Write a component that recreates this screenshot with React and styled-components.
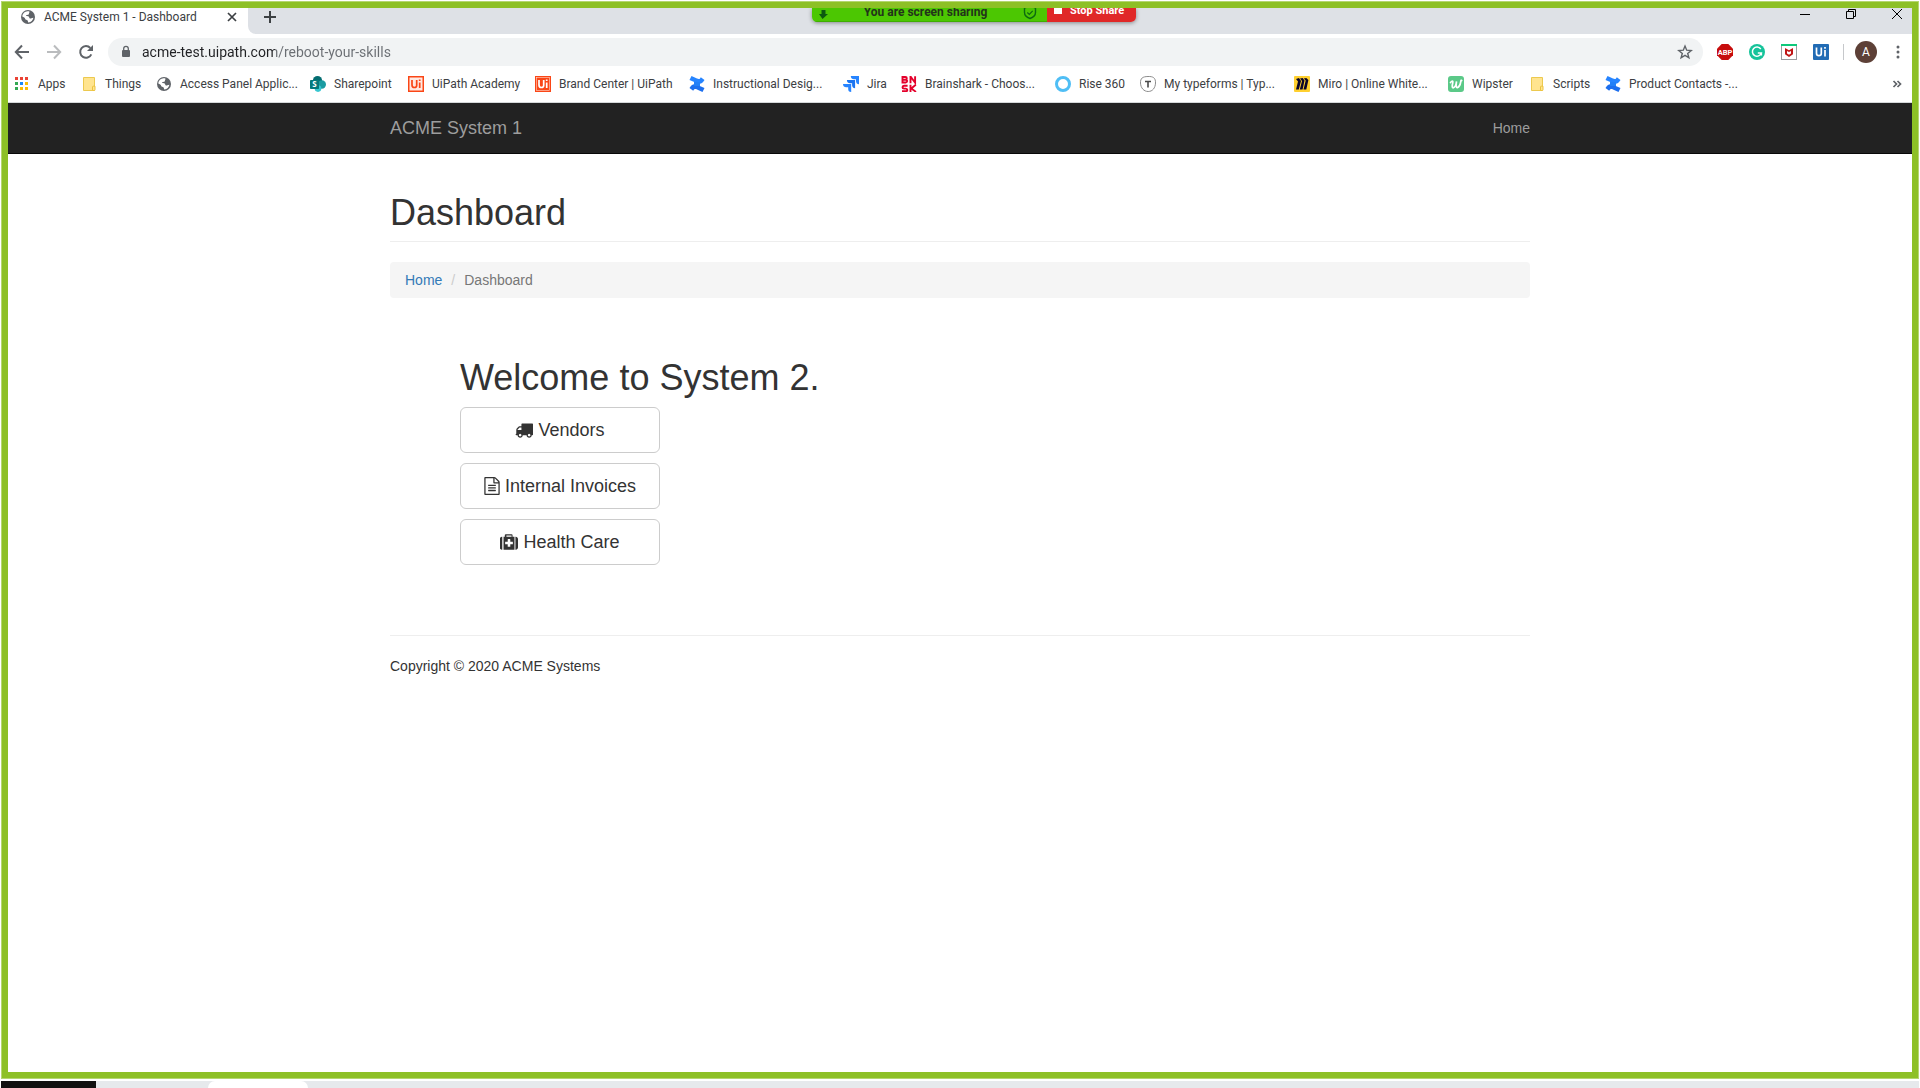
import React from "react";
import styled, { createGlobalStyle } from "styled-components";

const uiFont = 'Roboto, "Open Sans", sans-serif';
const pageFont = '"Liberation Sans", Arial, sans-serif';

const GlobalStyle = createGlobalStyle`
  *, *::before, *::after { box-sizing: border-box; }
  body { margin: 0; background: #fff; }
  button { font: inherit; color: inherit; padding: 0; border: 0; background: none; }
  svg { display: block; flex: none; }
`;

const Screen = styled.div`
  display: flex;
  flex-direction: column;
  min-height: 100vh;
  padding: 1px 1px 0;
  background: #fff;
`;

const ShareFrame = styled.div`
  position: relative;
  flex: 1;
  display: flex;
  flex-direction: column;
  border: 1px solid #b4d670;
  background: #8dc026;
  padding: 6px;
`;

const Browser = styled.div`
  position: relative;
  flex: 1;
  overflow: hidden;
  background: #fff;
  font-family: ${uiFont};
  font-size: 12px;
  color: #3c4043;
`;

/* Tab strip */

const TabStrip = styled.div`
  display: flex;
  height: 26px;
`;

const Tab = styled.div`
  display: flex;
  align-items: center;
  gap: 8px;
  width: 240px;
  height: 18px;
  padding: 0 8px 0 12px;
  line-height: 18px;
  white-space: nowrap;
`;

const TabTitle = styled.span`
  flex: 1;
`;

const IconButton = styled.button`
  display: flex;
  align-items: center;
  justify-content: center;
  flex: none;
  width: ${(p) => p.$width || 28}px;
  height: ${(p) => p.$height || 28}px;
  color: ${(p) => p.$color || "#5f6368"};
`;

const StripRest = styled.div`
  flex: 1;
  display: flex;
  justify-content: space-between;
  padding-left: 8px;
  background: #dee1e6;
  border-bottom-left-radius: 8px;
`;

const WindowControls = styled.div`
  display: flex;
  margin-right: -8px;
`;

/* Screen sharing bar */

const ShareBar = styled.div`
  position: absolute;
  top: 0;
  left: 804px;
  display: flex;
  height: 14px;
  border-radius: 0 0 5px 5px;
  box-shadow: 0 1px 4px rgba(0, 0, 0, 0.4);
  overflow: hidden;
  font-size: 12px;
  font-weight: 700;
  line-height: 16px;
  white-space: nowrap;
`;

const ShareStatus = styled.div`
  display: flex;
  align-items: flex-end;
  justify-content: space-between;
  width: 235px;
  padding: 0 10px 1px 6px;
  background: #4cc702;
  border-bottom: 1px solid #3fae00;
  color: #23331b;
`;

const StopShare = styled.button`
  display: flex;
  align-items: flex-end;
  gap: 8px;
  width: 89px;
  padding: 0 0 3px 7px;
  background: #e02828;
  color: #fff;
  font-size: 11px;
  font-weight: 700;
  line-height: 16px;
`;

const StopMark = styled.span`
  width: 8px;
  height: 8px;
  margin-bottom: 5px;
  background: #fff;
`;

/* Toolbar */

const Toolbar = styled.div`
  display: flex;
  align-items: center;
  gap: 4px;
  height: 36px;
`;

const AddressBar = styled.label`
  flex: 1;
  display: flex;
  align-items: center;
  height: 28px;
  margin: 0 4px;
  padding: 0 10px 0 12px;
  border-radius: 14px;
  background: #f1f3f4;
  color: #5f6368;
`;

const AddressInput = styled.input`
  flex: 1;
  min-width: 0;
  height: 24px;
  margin-left: 10px;
  padding: 0;
  border: 0;
  outline: 0;
  font-family: ${uiFont};
  font-size: 14px;
  line-height: 24px;
  color: #202124;
  background: linear-gradient(to right, #202124 133px, #6a6e73 133px);
  -webkit-background-clip: text;
  background-clip: text;
  -webkit-text-fill-color: transparent;
`;

const Divider = styled.span`
  width: 1px;
  height: 16px;
  margin: 0 4px;
  background: #c6c8cb;
`;

const Avatar = styled.span`
  display: flex;
  align-items: center;
  justify-content: center;
  width: 22px;
  height: 22px;
  border-radius: 50%;
  background: #5d4037;
  color: #fff;
  font-size: 12px;
`;

/* Bookmarks */

const Bookmarks = styled.nav`
  display: flex;
  align-items: center;
  height: 33px;
  padding: 0 6px 4px;
  border-bottom: 1px solid #d5d8da;
`;

const Bookmark = styled.a`
  display: flex;
  align-items: center;
  gap: 8px;
  flex: none;
  width: ${(p) => p.$width}px;
  height: 28px;
  color: inherit;
  text-decoration: none;
  white-space: nowrap;
`;

const Spacer = styled.span`
  flex: 1;
`;

/* Web page */

const Page = styled.div`
  font-family: ${pageFont};
  font-size: 14px;
  line-height: 20px;
  color: #333;
`;

const Container = styled.div`
  max-width: 1140px;
  margin: 0 auto;
`;

const Navbar = styled.header`
  background: #222;
  border-bottom: 1px solid #080808;
`;

const NavRow = styled(Container)`
  display: flex;
  align-items: center;
  justify-content: space-between;
  height: 50px;
`;

const NavLink = styled.a`
  color: #9d9d9d;
  text-decoration: none;
  font-size: ${(p) => (p.$brand ? 18 : 14)}px;
`;

const Title = styled.h1`
  margin: 0;
  font-size: 36px;
  font-weight: 400;
  line-height: 40px;
`;

const PageHeader = styled.div`
  margin: 39px 0 20px;
  padding-bottom: 8px;
  border-bottom: 1px solid #eee;
`;

const Breadcrumb = styled.nav`
  display: flex;
  padding: 8px 15px;
  border-radius: 4px;
  background: #f5f5f5;
  color: #777;
`;

const Crumb = styled.a`
  color: #337ab7;
  text-decoration: none;
`;

const Slash = styled.span`
  padding: 0 9px;
  color: #ccc;
`;

const Welcome = styled.main`
  padding: 60px 70px 70px;
`;

const Actions = styled.div`
  display: flex;
  flex-direction: column;
  gap: 10px;
  width: 200px;
  margin-top: 9px;
`;

const ActionButton = styled.button`
  && {
    display: flex;
    align-items: center;
    justify-content: center;
    gap: 5px;
    height: 46px;
    border: 1px solid #ccc;
    border-radius: 6px;
    background: #fff;
    font-size: 18px;
    line-height: 24px;
    color: #333;
  }
`;

const Footer = styled.footer`
  padding: 20px 0;
  border-top: 1px solid #eee;
`;

/* Taskbar edge */

const Taskbar = styled.div`
  display: flex;
  height: 7px;
  margin-top: 2px;
  background: #e6e9ec;
`;

const TaskStart = styled.span`
  width: 95px;
  background: #111;
`;

const TaskTab = styled.span`
  width: 100px;
  margin-left: 112px;
  border-radius: 8px 8px 0 0;
  background: #fff;
`;

/* Icons */

const Svg = ({ size = 16, box = "0 0 16 16", width, children, ...rest }) => (
  <svg width={width || size} height={size} viewBox={box} fill="none" aria-hidden="true" {...rest}>
    {children}
  </svg>
);

const Globe = () => (
  <Svg>
    <circle cx="8" cy="8" r="7" fill="#5f6368" />
    <path d="M7.5 2.2c2.2 0 2.6.7 1.6 1.5-.5.5.3 1.2-.4 1.7-.9.6-2.4.1-2.6 1.1-.1.8 1.9.5 2.6 1.1.7.5.3 1.6 1.2 1.9.9.2 1.7-.7 3.5-.8-.5 2.600-2.300 4.500-4.800 4.800-1-.3-.4-1.400-1-2.100-.7-.7-2.300-.4-2.500-1.600C5 8.600 3.700 8.300 2.300 7.600 2.400 4.600 4.700 2.300 7.500 2.200z" fill="#fff" />
    <path d="M9.500 5.800c.8-.8 2.200-.7 3.500-.3.300.6.500 1.200.6 1.800-1.300.5-4.400.300-4.100-1.500z" fill="#5f6368" />
  </Svg>
);

const AppsGrid = () => {
  const colors = ["#ea4335", "#ea4335", "#ea4335", "#34a853", "#1a88f8", "#fbbc04", "#34a853", "#fbbc04", "#fbbc04"];
  return (
    <Svg>
      {colors.map((c, i) => (
        <rect key={i} x={1 + (i % 3) * 5} y={1 + Math.floor(i / 3) * 5} width="3" height="3" fill={c} />
      ))}
    </Svg>
  );
};

const Note = () => (
  <Svg>
    <path d="M2.500 1.500h11v9.500h0v3.500h-11z" fill="#ffe48f" stroke="#ecc94f" />
    <path d="M11.500 14.500v-3.500q0-.8.8-.8h1.700v3.500q0 .8-.8.800z" fill="#ffe48f" stroke="#ecc33e" />
  </Svg>
);

const Sharepoint = () => (
  <Svg>
    <circle cx="7.500" cy="4.600" r="4.600" fill="#036c70" />
    <circle cx="11.800" cy="8.500" r="4.200" fill="#1a9ba1" />
    <circle cx="8" cy="12.600" r="3.300" fill="#37c6d0" />
    <rect y="4" width="9" height="9" rx=".8" fill="#03787c" />
    <text x="4.500" y="11.300" fontSize="8" fontWeight="700" textAnchor="middle" fill="#fff" fontFamily="Open Sans">S</text>
  </Svg>
);

const UiMark = ({ light }) => (
  <Svg>
    <rect width="16" height="16" fill="#fa4616" />
    <rect x="1.500" y="1.500" width="13" height="13" fill={light ? "#ffe9e2" : "#fa4616"} stroke={light ? "none" : "#ffd9cd"} strokeWidth=".6" />
    <path d="M4 4v5q0 2.500 2.400 2.500T8.700 9V4M11.700 6.400v5.600M11.700 3.500v1.600" stroke={light ? "#fa4616" : "#fff"} strokeWidth="1.700" />
  </Svg>
);

const Confluence = () => (
  <Svg>
    <path d="M.5 12c2-3.600 4.400-4.800 8.500-2.700l6.500 2.600-2 4-5.500-2.500c-1.900-.9-2.900-.6-3.800 1.400z" fill="#1d6fee" />
    <path d="M15.500 4c-2 3.600-4.400 4.800-8.500 2.700L.5 4.100l2-4L8 2.600c1.900.9 2.900.6 3.800-1.400z" fill="#2684ff" />
    <path d="M5 6h6v4H5z" fill="#2380f7" />
  </Svg>
);

const Jira = () => (
  <Svg>
    <path d="M7.800 0H16v8.200c-2.200 0-3-1.500-3-3.200V3.200h-2C9.200 3.200 7.800 2.200 7.800 0z" fill="#2684ff" />
    <path d="M3.900 4h8.200v8.200c-2.200 0-3-1.500-3-3.200V7.200h-2C5.300 7.200 3.900 6.200 3.900 4z" fill="#1b74f0" />
    <path d="M0 8h8.200v8c-2.200 0-3-1.300-3-3v-1.800h-2C1.400 11.200 0 10.200 0 8z" fill="#2684ff" />
  </Svg>
);

const Brainshark = () => (
  <Svg>
    <g stroke="#e4002b" strokeWidth="1.900">
      <path d="M1.500 1v5.500h3.200q1.500-.2 1.500-1.400T4.700 3.700H1.500h2.900q1.400-.1 1.400-1.400T4.400 1zM9.500 7.200V.5l4.600 6.200V.2" />
      <path d="M6.600 9.800H3.100q-1.600.1-1.600 1.400t1.600 1.400h1.700q1.500.1 1.500 1.400T4.800 15.300H1M9.500 8.800v7.200M14.800 8.800l-4.500 3.600 4.700 3.500" />
    </g>
  </Svg>
);

const Ring = () => (
  <Svg>
    <circle cx="8" cy="8" r="6.500" stroke="#4fbef5" strokeWidth="3" />
  </Svg>
);

const Typeform = () => (
  <Svg>
    <path d="M8 .5c5-.2 7.700 1.300 7.500 6.500-.2 5-3 8.500-7.300 8.500S.7 12 .5 7C.4 2.200 2.500.6 8 .5z" stroke="#8b8b8b" />
    <path d="M5 5.500h6M8 5.500v6" stroke="#4a4a4a" strokeWidth="1.600" />
  </Svg>
);

const Miro = () => (
  <Svg>
    <rect width="16" height="16" rx="1" fill="#ffd02f" />
    <path d="M2 3l2 2.500-2 8h2.800L7 5 5 2zM6 2.500l2 2.500-2.200 8.500h2.800L10.500 4.500 8.700 2zM9.700 2.500l2 2-2.200 9h2.800L14.400 4 12.300 2z" fill="#0b0529" />
  </Svg>
);

const Wipster = () => (
  <Svg>
    <rect width="16" height="16" rx="3" fill="#5bc988" />
    <path d="M2.500 6.500Q5 3.500 4.800 6.500 3.500 12 5.300 11.800 7.800 11 8.500 5.500 7.500 11.900 9.300 11.700 12 10.500 12.700 6q.2-2.500 1-1.500" stroke="#fff" strokeWidth="1.700" strokeLinecap="round" />
  </Svg>
);

const bookmarks = [
  { label: "Apps", width: 67, icon: <AppsGrid /> },
  { label: "Things", width: 75, icon: <Note /> },
  { label: "Access Panel Applic...", width: 154, icon: <Globe /> },
  { label: "Sharepoint", width: 98, icon: <Sharepoint /> },
  { label: "UiPath Academy", width: 127, icon: <UiMark light /> },
  { label: "Brand Center | UiPath", width: 154, icon: <UiMark /> },
  { label: "Instructional Desig...", width: 154, icon: <Confluence /> },
  { label: "Jira", width: 58, icon: <Jira /> },
  { label: "Brainshark - Choos...", width: 154, icon: <Brainshark /> },
  { label: "Rise 360", width: 85, icon: <Ring /> },
  { label: "My typeforms | Typ...", width: 154, icon: <Typeform /> },
  { label: "Miro | Online White...", width: 154, icon: <Miro /> },
  { label: "Wipster", width: 81, icon: <Wipster /> },
  { label: "Scripts", width: 76, icon: <Note /> },
  { label: "Product Contacts -...", width: 154, icon: <Confluence /> },
];

const TruckIcon = () => (
  <Svg size={18} box="0 0 1792 1792">
    <path fill="currentColor" d="M640 1408q0-52-38-90t-90-38-90 38-38 90 38 90 90 38 90-38 38-90zm-384-512h384v-256h-158q-13 0-22 9l-195 195q-9 9-9 22v30zm1280 512q0-52-38-90t-90-38-90 38-38 90 38 90 90 38 90-38 38-90zm256-1088v1024q0 15-4 26.500t-13.500 18.500-16.500 11.500-23.500 6-22.500 2-25.500 0-22.500-.5q0 106-75 181t-181 75-181-75-75-181h-384q0 106-75 181t-181 75-181-75-75-181h-64q-3 0-22.500.5t-25.500 0-22.500-2-23.500-6-16.500-11.500-13.500-18.500-4-26.500q0-26 19-45t45-19v-320q0-8-.5-35t0-38 2.500-34.500 6.500-37 14-30.500 22.500-30l198-198q19-19 50.500-32t58.500-13h160v-192q0-26 19-45t45-19h1024q26 0 45 19t19 45z" />
  </Svg>
);

const FileIcon = () => (
  <Svg size={18} width={16} box="128 0 1536 1792">
    <path fill="currentColor" d="M1596 380q28 28 48 76t20 88v1152q0 40-28 68t-68 28h-1344q-40 0-68-28t-28-68v-1600q0-40 28-68t68-28h896q40 0 88 20t76 48zm-444-244v376h376q-10-29-22-41l-313-313q-12-12-41-22zm384 1528v-1024h-416q-40 0-68-28t-28-68v-416h-768v1536h1280zm-1024-864q0-14 9-23t23-9h704q14 0 23 9t9 23v64q0 14-9 23t-23 9h-704q-14 0-23-9t-9-23v-64zm736 224q14 0 23 9t9 23v64q0 14-9 23t-23 9h-704q-14 0-23-9t-9-23v-64q0-14 9-23t23-9h704zm0 256q14 0 23 9t9 23v64q0 14-9 23t-23 9h-704q-14 0-23-9t-9-23v-64q0-14 9-23t23-9h704z" />
  </Svg>
);

const MedkitIcon = () => (
  <Svg size={18} box="0 0 1792 1792">
    <path fill="currentColor" d="M1280 1088v-192q0-14-9-23t-23-9h-224v-224q0-14-9-23t-23-9h-192q-14 0-23 9t-9 23v224h-224q-14 0-23 9t-9 23v192q0 14 9 23t23 9h224v224q0 14 9 23t23 9h192q14 0 23-9t9-23v-224h224q14 0 23-9t9-23zm-640-704h512v-128h-512v128zm-416 0v1280h-32q-92 0-158-66t-66-158v-832q0-92 66-158t158-66h32zm1216 0v1280h-1088v-1280h128v-160q0-40 28-68t68-28h576q40 0 68 28t28 68v160h128zm352 224v832q0 92-66 158t-158 66h-32v-1280h32q92 0 158 66t66 158z" />
  </Svg>
);

export default function App() {
  return (
    <Screen>
      <GlobalStyle />
      <ShareFrame>
        <Browser>
          <TabStrip>
            <Tab>
              <Globe />
              <TabTitle>ACME System 1 - Dashboard</TabTitle>
              <IconButton $width={16} $height={16} $color="#3c4043" aria-label="Close tab">
                <Svg>
                  <path d="M4 4l8 8M12 4l-8 8" stroke="currentColor" strokeWidth="1.700" />
                </Svg>
              </IconButton>
            </Tab>
            <StripRest>
              <IconButton $height={18} $color="#3c4043" aria-label="New tab">
                <Svg>
                  <path d="M8 2v12M2 8h12" stroke="currentColor" strokeWidth="2" />
                </Svg>
              </IconButton>
              <WindowControls>
                <IconButton $width={46} $height={12} $color="#000" aria-label="Minimize">
                  <Svg size={12} box="0 0 12 12">
                    <path d="M1 6.500h10" stroke="currentColor" />
                  </Svg>
                </IconButton>
                <IconButton $width={46} $height={12} $color="#000" aria-label="Restore">
                  <Svg size={12} box="0 0 12 12">
                    <path d="M1.500 3.500h7v7h-7zM3.500 3.500v-2h7v7h-2" stroke="currentColor" />
                  </Svg>
                </IconButton>
                <IconButton $width={46} $height={12} $color="#000" aria-label="Close">
                  <Svg size={12} box="0 0 12 12">
                    <path d="M1 1l10 10M11 1L1 11" stroke="currentColor" />
                  </Svg>
                </IconButton>
              </WindowControls>
            </StripRest>
          </TabStrip>

          <Toolbar>
            <IconButton aria-label="Back">
              <Svg>
                <path d="M15 8H2M8 1.500L1.800 8 8 14.500" stroke="currentColor" strokeWidth="2" />
              </Svg>
            </IconButton>
            <IconButton $color="#babcbe" aria-label="Forward">
              <Svg>
                <path d="M1 8h13M8 1.500L14.200 8 8 14.500" stroke="currentColor" strokeWidth="2" />
              </Svg>
            </IconButton>
            <IconButton aria-label="Reload">
              <Svg>
                <path d="M13.300 10.300A5.800 5.800 0 1 1 12.300 4" stroke="currentColor" strokeWidth="2" />
                <path d="M15 1v6H9z" fill="currentColor" />
              </Svg>
            </IconButton>
            <AddressBar>
              <Svg size={14} width={12} box="0 0 12 14">
                <rect x="2" y="5" width="8" height="7" rx="1" fill="currentColor" />
                <path d="M3.700 5.500V3.600a2.300 2.300 0 0 1 4.600 0v1.900" stroke="currentColor" strokeWidth="1.300" />
              </Svg>
              <AddressInput aria-label="Address" defaultValue="acme-test.uipath.com/reboot-your-skills" />
              <IconButton $width={16} aria-label="Bookmark this page">
                <Svg>
                  <path d="M8 2l1.700 4.200 4.500.3-3.500 2.900 1.200 4.400L8 11.400l-3.900 2.400 1.200-4.400-3.500-2.900 4.500-.3z" stroke="currentColor" strokeWidth="1.400" />
                </Svg>
              </IconButton>
            </AddressBar>
            <IconButton aria-label="AdBlock Plus">
              <Svg>
                <path d="M4.700 0h6.600L16 4.700v6.600L11.300 16H4.700L0 11.300V4.700z" fill="#c70d0d" />
                <text x="8" y="10.700" fontSize="7.500" fontWeight="700" textAnchor="middle" fill="#fff" fontFamily="Roboto">ABP</text>
              </Svg>
            </IconButton>
            <IconButton aria-label="Grammarly">
              <Svg>
                <circle cx="8" cy="8" r="8" fill="#15c39a" />
                <path d="M11.800 5A4.600 4.600 0 1 0 12.400 9H8.800M12.400 8.500v3" stroke="#fff" strokeWidth="1.500" />
              </Svg>
            </IconButton>
            <IconButton aria-label="WebAdvisor">
              <Svg>
                <rect x=".5" y=".5" width="15" height="15" fill="#fff" stroke="#9b9da0" />
                <rect width="16" height="2" fill="#0fc97b" />
                <path d="M4 4l4 2.200L12 4v6.300L8 13l-4-2.700z" fill="#c01818" />
                <path d="M6 7l2 1 2-1v2.500l-2 1.200-2-1.200z" fill="#fff" />
              </Svg>
            </IconButton>
            <IconButton aria-label="UiPath">
              <Svg>
                <rect width="16" height="16" rx="1" fill="#216bb4" />
                <path d="M3.500 3.500v5.700q0 2.400 2.400 2.400t2.400-2.400V3.500M12 6v6.500M12 3v1.700" stroke="#fff" strokeWidth="1.700" />
              </Svg>
            </IconButton>
            <Divider />
            <IconButton aria-label="Profile">
              <Avatar>A</Avatar>
            </IconButton>
            <IconButton aria-label="Menu">
              <Svg>
                <circle cx="8" cy="3" r="1.500" fill="currentColor" />
                <circle cx="8" cy="8" r="1.500" fill="currentColor" />
                <circle cx="8" cy="13" r="1.500" fill="currentColor" />
              </Svg>
            </IconButton>
          </Toolbar>

          <Bookmarks aria-label="Bookmarks">
            {bookmarks.map((b) => (
              <Bookmark key={b.label} href="#" $width={b.width}>
                {b.icon}
                <span>{b.label}</span>
              </Bookmark>
            ))}
            <Spacer />
            <IconButton $width={18} aria-label="More bookmarks">
              <Svg>
                <path d="M4.500 5l3 3-3 3M8.500 5l3 3-3 3" stroke="currentColor" strokeWidth="1.700" />
              </Svg>
            </IconButton>
          </Bookmarks>

          <Page>
            <Navbar>
              <NavRow>
                <NavLink href="#" $brand>ACME System 1</NavLink>
                <NavLink href="#">Home</NavLink>
              </NavRow>
            </Navbar>
            <Container>
              <PageHeader>
                <Title>Dashboard</Title>
              </PageHeader>
              <Breadcrumb aria-label="Breadcrumb">
                <Crumb href="#">Home</Crumb>
                <Slash>/</Slash>
                <span>Dashboard</span>
              </Breadcrumb>
              <Welcome>
                <Title as="h2">Welcome to System 2.</Title>
                <Actions>
                  <ActionButton><TruckIcon />Vendors</ActionButton>
                  <ActionButton><FileIcon />Internal Invoices</ActionButton>
                  <ActionButton><MedkitIcon />Health Care</ActionButton>
                </Actions>
              </Welcome>
              <Footer>Copyright © 2020 ACME Systems</Footer>
            </Container>
          </Page>

          <ShareBar>
            <ShareStatus>
              <Svg size={10} box="0 0 10 10">
                <path d="M3.500 0h4v4H10L4.500 9 1 4h2.500z" fill="#0c5a10" />
              </Svg>
              <span>You are screen sharing</span>
              <Svg size={14} box="0 0 14 14">
                <path d="M7 0l5.500 2v4.500q0 4-5.500 6-5.500-2-5.500-6V2z" stroke="#0c6a10" strokeWidth="1.400" />
                <path d="M4.300 6.500l2 2 3.400-3.700" stroke="#0c6a10" strokeWidth="1.200" />
              </Svg>
            </ShareStatus>
            <StopShare>
              <StopMark />
              Stop Share
            </StopShare>
          </ShareBar>
        </Browser>
      </ShareFrame>
      <Taskbar>
        <TaskStart />
        <TaskTab />
      </Taskbar>
    </Screen>
  );
}
